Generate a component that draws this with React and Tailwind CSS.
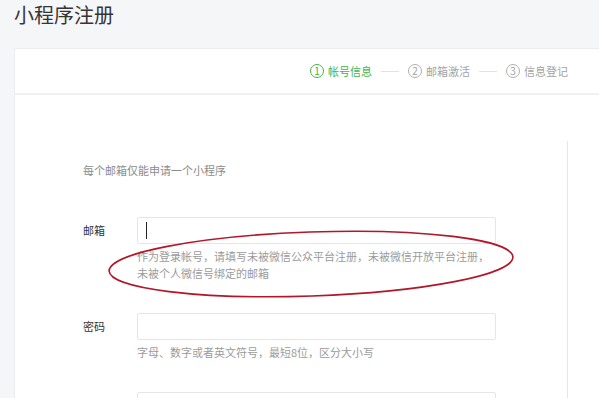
import React from "react";

const steps = [
  { n: "1", label: "帐号信息", active: true },
  { n: "2", label: "邮箱激活" },
  { n: "3", label: "信息登记" },
];

const Step = ({ n, label, active }) => (
  <div
    className={`flex items-center gap-[4px] text-[11px] ${
      active ? "text-[#44b549]" : "text-[#a3a3a3]"
    }`}
  >
    <span
      className={`flex h-[14px] w-[14px] items-center justify-center rounded-full border text-[10px] leading-none ${
        active ? "border-[#44b549]" : "border-[#b0b0b0]"
      }`}
    >
      {n}
    </span>
    <span>{label}</span>
  </div>
);

const Field = ({ label, hint, cursor }) => (
  <div className="flex">
    <div className="flex h-[27px] w-[54px] items-center text-[11px] text-[#353535]">
      {label}
    </div>
    <div className="flex flex-col">
      <div className="relative h-[27px] w-[359px] rounded-[2px] border border-[#e4e6ea] bg-white">
        {cursor && (
          <span className="absolute left-[8px] top-[4px] h-[17px] w-px bg-[#222]" />
        )}
      </div>
      {hint && (
        <div className="mt-[4px] w-[359px] text-[11px] leading-[17px] text-[#9b9b9b]">
          {hint}
        </div>
      )}
    </div>
  </div>
);

export default function App() {
  return (
    <div
      className="relative h-[398px] w-[599px] overflow-hidden bg-[#f5f6f8]"
      style={{ fontFamily: '"Noto Sans CJK SC", "Noto Sans", sans-serif' }}
    >
      <h1 className="pl-[14px] pt-[1px] text-[20px] leading-[28px] font-normal text-[#353535]">
        小程序注册
      </h1>

      <div className="ml-[14px] mt-[19px] border-l border-t border-[#ebedf0] bg-white">
        {/* steps */}
        <div className="flex h-[46px] items-center justify-end gap-[9px] border-b-2 border-[#eff1f3] pr-[31px]">
          {steps.map((s, i) => (
            <React.Fragment key={s.n}>
              {i > 0 && <span className="h-px w-[18px] bg-[#e3e3e3]" />}
              <Step {...s} />
            </React.Fragment>
          ))}
        </div>

        <div className="pt-[46px]">
          <div className="h-[260px] w-[553px] border-r border-[#e6e6e6] pl-[68px] pt-[20px]">
            <p className="text-[11px] leading-[18px] text-[#8c8c8c]">
              每个邮箱仅能申请一个小程序
            </p>
            <div className="mt-[38px] flex flex-col gap-[31px]">
              <Field
                label="邮箱"
                cursor
                hint="作为登录帐号，请填写未被微信公众平台注册，未被微信开放平台注册，未被个人微信号绑定的邮箱"
              />
              <Field label="密码" hint="字母、数字或者英文符号，最短8位，区分大小写" />
              <Field label="确认密码" />
            </div>
          </div>
        </div>
      </div>

      {/* hand-drawn annotation */}
      <svg
        className="pointer-events-none absolute left-0 top-0"
        width="599"
        height="398"
        viewBox="0 0 599 398"
      >
        <ellipse
          cx="311"
          cy="264"
          rx="202"
          ry="32"
          transform="rotate(-2 311 264)"
          fill="none"
          stroke="#b3162a"
          strokeWidth="1.6"
        />
      </svg>
    </div>
  );
}
